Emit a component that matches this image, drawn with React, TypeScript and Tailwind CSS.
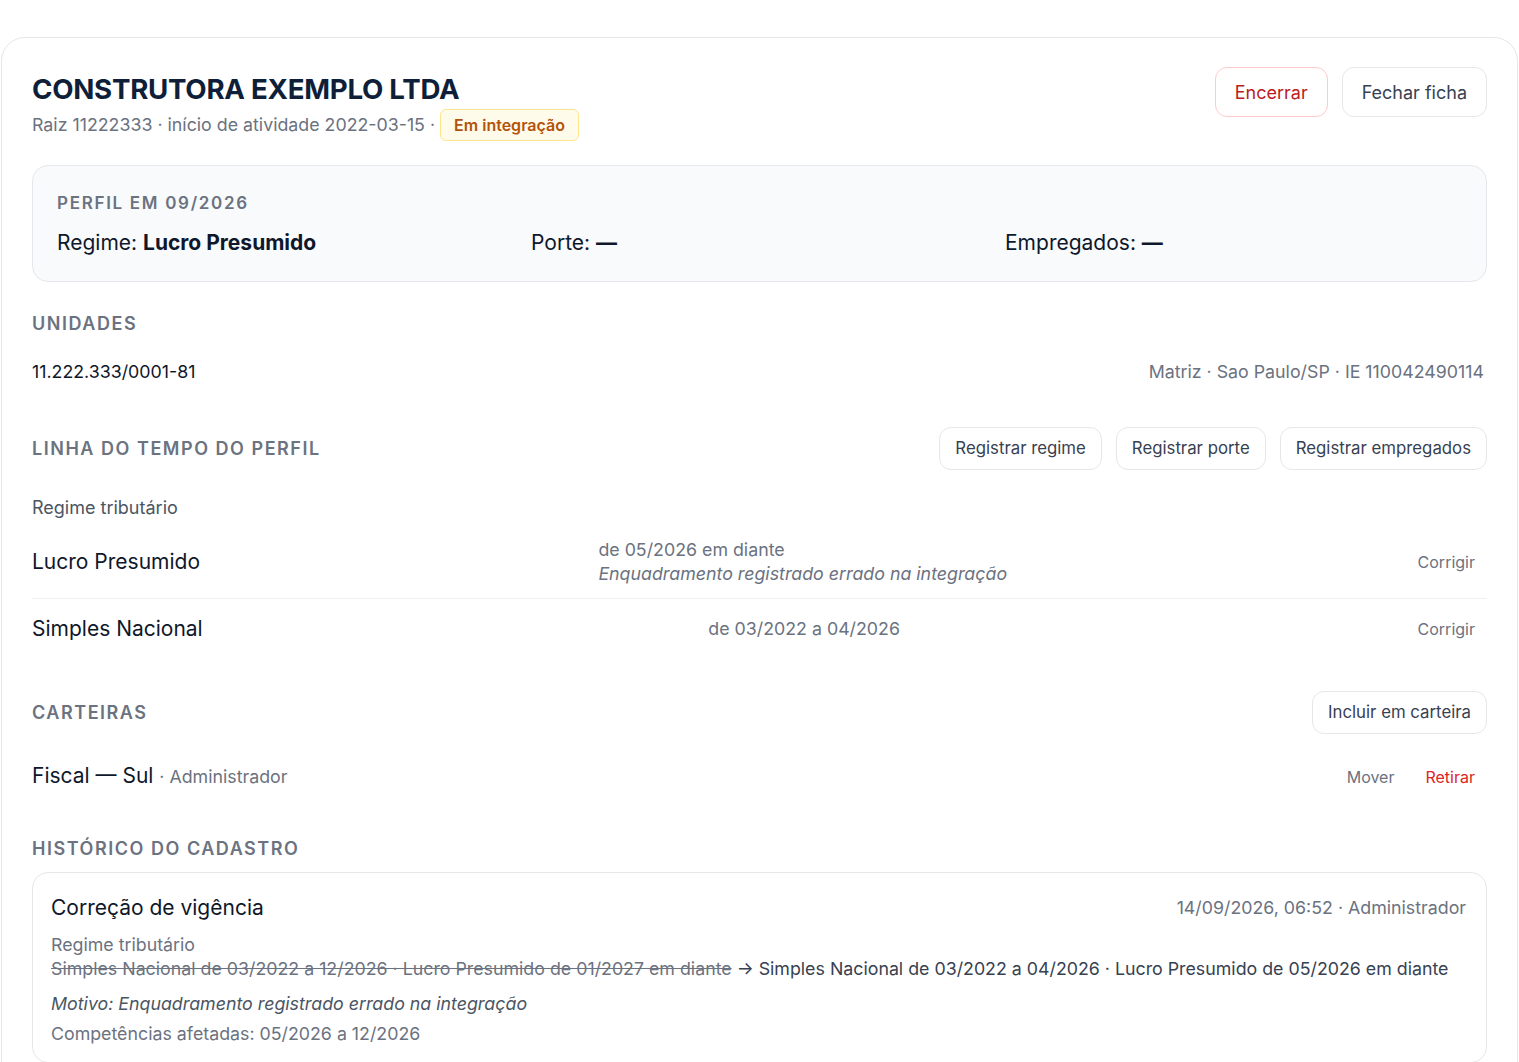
import type { FC, ReactNode } from "react";

const heading = "font-['Inter',sans-serif] font-semibold uppercase text-[#6b7280]";

const SectionTitle: FC<{ children: ReactNode }> = ({ children }) => (
    <h2 className={`${heading} text-[18px] leading-[26px] tracking-[0.085em]`}>{children}</h2>
);

const GhostButton: FC<{ children: ReactNode; danger?: boolean; tall?: boolean }> = ({ children, danger, tall }) => (
    <button
        className={`rounded-xl border bg-white ${tall ? "h-[50px] px-[19px] text-[18px]" : "h-[43px] px-[15px] text-[16.8px]"} ${
            danger ? "border-[#fecaca] text-[#b91c1c]" : "border-[#e5e7eb] text-[#374151]"
        }`}
    >
        {children}
    </button>
);

type Period = {
    name: string;
    range: string;
    note?: string;
};

const periods: Period[] = [
    { name: "Lucro Presumido", range: "de 05/2026 em diante", note: "Enquadramento registrado errado na integração" },
    { name: "Simples Nacional", range: "de 03/2022 a 04/2026" },
];

const App: FC = () => {
    return (
        <div className="min-h-screen bg-white pt-[37px] font-['Inter',sans-serif] text-[17.8px] text-[#0f172a]">
            <div className="mx-px rounded-[24px] border border-[#e5e7eb] bg-white px-[30px] pb-10 pt-[29px]">
                {/* header */}
                <div className="flex items-start justify-between">
                    <div>
                        <h1 className="text-[27.7px] font-bold leading-[44px] tracking-[-0.01em] text-[#0f1f3a]">
                            CONSTRUTORA EXEMPLO LTDA
                        </h1>
                        <div className="mt-[-2px] flex items-center gap-[5px] leading-[26px] text-[#6b7280]">
                            <span>Raiz 11222333 · início de atividade 2022-03-15 ·</span>
                            <span className="rounded-md border border-[#fde68a] bg-[#fffbeb] px-[13px] py-[2px] text-[16px] font-semibold text-[#b45309]">
                                Em integração
                            </span>
                        </div>
                    </div>
                    <div className="flex gap-[14px]">
                        <GhostButton danger tall>
                            Encerrar
                        </GhostButton>
                        <GhostButton tall>Fechar ficha</GhostButton>
                    </div>
                </div>

                {/* current profile */}
                <div className="mt-[24px] rounded-2xl border border-[#e5e7eb] bg-[#f8fafc] px-[24px] pb-[23px] pt-[24px]">
                    <div className={`${heading} text-[17px] leading-[26px] tracking-[0.1em]`}>Perfil em 09/2026</div>
                    <div className="mt-[12px] grid grid-cols-3 gap-x-[17px] text-[21px] leading-[30px]">
                        <div>
                            Regime: <strong className="font-bold">Lucro Presumido</strong>
                        </div>
                        <div>
                            Porte: <strong className="font-bold">—</strong>
                        </div>
                        <div>
                            Empregados: <strong className="font-bold">—</strong>
                        </div>
                    </div>
                </div>

                {/* units */}
                <div className="mt-[29px]">
                    <SectionTitle>Unidades</SectionTitle>
                    <div className="mt-[22px] flex items-center justify-between leading-[26px]">
                        <span>11.222.333/0001-81</span>
                        <span className="pr-[3px] text-[#6b7280]">Matriz · Sao Paulo/SP · IE 110042490114</span>
                    </div>
                </div>

                {/* timeline */}
                <div className="mt-[42px] flex items-center justify-between">
                    <SectionTitle>Linha do tempo do perfil</SectionTitle>
                    <div className="flex gap-[14px]">
                        <GhostButton>Registrar regime</GhostButton>
                        <GhostButton>Registrar porte</GhostButton>
                        <GhostButton>Registrar empregados</GhostButton>
                    </div>
                </div>
                <div className="mt-[25px] text-[18px] leading-[26px] text-[#4b5563]">Regime tributário</div>
                <div className="mt-[14px]">
                    {periods.map((p, i) => (
                        <div
                            key={p.name}
                            className={`flex items-center justify-between ${
                                i > 0 ? "border-t border-[#eef0f3] pb-[18px] pt-[15px]" : "pb-[12px] pt-[3px]"
                            }`}
                        >
                            <span className="text-[21px] leading-[30px]">{p.name}</span>
                            <div className="leading-[24px] text-[#6b7280]">
                                <div>{p.range}</div>
                                {p.note && <div className="italic">{p.note}</div>}
                            </div>
                            <button className="px-3 text-[16px] text-[#6b7280]">Corrigir</button>
                        </div>
                    ))}
                </div>

                {/* portfolios */}
                <div className="mt-[29px] flex items-center justify-between">
                    <SectionTitle>Carteiras</SectionTitle>
                    <GhostButton>Incluir em carteira</GhostButton>
                </div>
                <div className="mt-[27px] flex items-center justify-between">
                    <div className="text-[21px] leading-[30px]">
                        Fiscal — Sul <span className="text-[17.8px] text-[#6b7280]">· Administrador</span>
                    </div>
                    <div className="flex text-[16px]">
                        <button className="px-3 text-[#6b7280]">Mover</button>
                        <button className="ml-[7px] px-3 text-[#dc2626]">Retirar</button>
                    </div>
                </div>

                {/* history */}
                <div className="mt-[44px]">
                    <SectionTitle>Histórico do cadastro</SectionTitle>
                    <div className="mt-[10px] rounded-2xl border border-[#e5e7eb] pb-[16px] pl-[18px] pr-[20px] pt-[20px]">
                        <div className="flex items-center justify-between">
                            <span className="text-[21px] leading-[30px]">Correção de vigência</span>
                            <span className="text-[#6b7280]">14/09/2026, 06:52 · Administrador</span>
                        </div>
                        <div className="mt-[10px] leading-[24px] text-[#6b7280]">Regime tributário</div>
                        <div className="whitespace-nowrap leading-[24px] text-[#374151]">
                            <span className="text-[#6b7280] line-through">
                                Simples Nacional de 03/2022 a 12/2026 · Lucro Presumido de 01/2027 em diante
                            </span>{" "}
                            → Simples Nacional de 03/2022 a 04/2026 · Lucro Presumido de 05/2026 em diante
                        </div>
                        <div className="mt-[11px] italic leading-[24px] text-[#4b5563]">
                            Motivo: Enquadramento registrado errado na integração
                        </div>
                        <div className="mt-[6px] leading-[24px] text-[#6b7280]">Competências afetadas: 05/2026 a 12/2026</div>
                    </div>
                </div>
            </div>
        </div>
    );
};

export default App;
